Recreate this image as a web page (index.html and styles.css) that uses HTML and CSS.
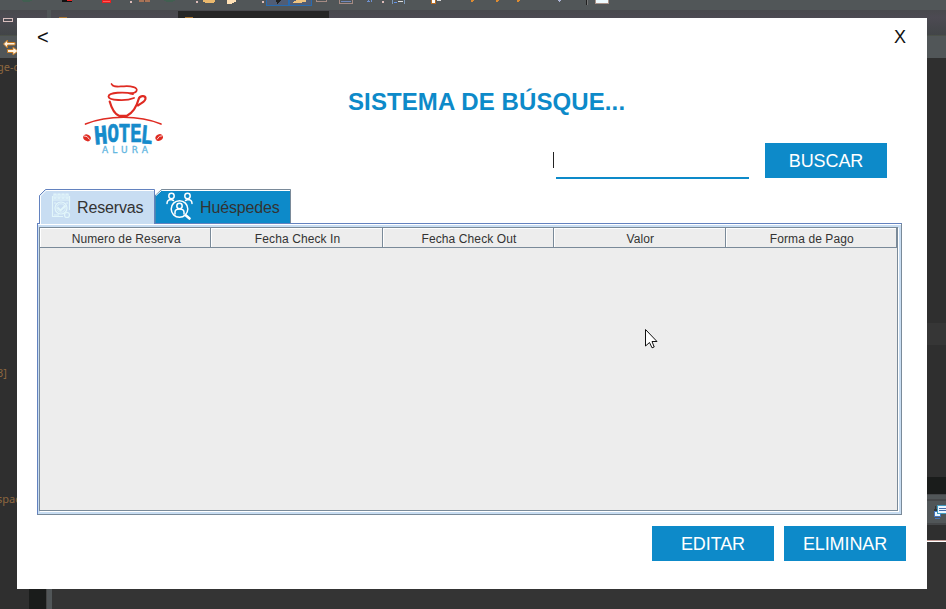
FILE: index.html
```html
<!DOCTYPE html>
<html lang="es">
<head>
<meta charset="utf-8">
<title>Sistema de búsqueda</title>
<link rel="stylesheet" href="styles.css">
</head>
<body>
<svg class="backdrop" width="946" height="609" viewBox="0 0 946 609" shape-rendering="crispEdges">
  <defs>
    <linearGradient id="bar" x1="0" y1="0" x2="0" y2="1"><stop offset="0" stop-color="#48494d"/><stop offset=".3" stop-color="#4c4a52"/><stop offset="1" stop-color="#424548"/></linearGradient>
  </defs>
  <rect width="946" height="609" fill="#2f2f2f"/>
  <rect width="946" height="10" fill="#515658"/>
  <rect y="10" width="946" height="25" fill="url(#bar)"/>
  <rect x="47" y="10" width="4" height="8" fill="#515658"/>
  <rect x="178" y="11" width="151" height="7" fill="#262626"/>
  <rect y="35" width="946" height="1" fill="#4b5049"/>
  <rect y="36" width="946" height="22" fill="#515658"/>
  <rect x="3.5" y="18.5" width="9" height="3" fill="none" stroke="#d9bfbf"/>
  <path d="M22 0h10v1h-2v1h-7v-1h-1z" fill="#415f51"/>
  <path d="M62 0h10v2h-10z" fill="#111"/><path d="M67 0h5v1h-5z" fill="#e22"/>
  <path d="M102 0h9v3h-9z" fill="#e92020"/><path d="M103 1h7v1h-7z" fill="#ff5959"/>
  <path d="M130 1h2v2h-2zM196 1h2v2h-2zM262 1h2v2h-2zM382 1h2v2h-2z" fill="#ddbbb8"/>
  <path d="M139 0h11v2h-11z" fill="#a97356"/><path d="M144 0h1v2h-1z" fill="#5e4943"/>
  <path d="M164 0h11v1h-2v1h-7v-1h-2z" fill="#415f51"/>
  <path d="M203 0h12v2h-1v1h-9v-1h-2z" fill="#eab86d"/><path d="M227 0h9v2h-2v1h-2v1h-5z" fill="#ffe1b6"/>
  <path d="M266.5 0v5.5h22V0M289.5 0v5.5h22V0" fill="#505d75" stroke="#286bb0"/>
  <path d="M276 0h5l-4 4z" fill="#222"/><path d="M297 0h9v2h-4v1h-9v-1z" fill="#edc37f"/>
  <path d="M316.500 0v1.500h10v-1.500M339.500 0v3.500h13v-3.500" fill="none" stroke="#a58b84"/><path d="M341 1h10v1h-10z" fill="#6f88bd"/>
  <path d="M368 0h1v1h1v1h-3zM371 0h1v2h-1z" fill="#6e91d0"/><path d="M392.500 0v3.500M404.500 0v3.500" fill="none" stroke="#7b98b8"/><path d="M394 2h3v1h-3z" fill="#5f91e8"/>
  <path d="M398 1h5v1h-5zM437 0h4v1h-4z" fill="#ddd"/>
  <path d="M431 0h5v4h-5z" fill="#b76c24"/><path d="M432 0h3v3h-3z" fill="#fff"/>
  <path d="M471 0h3v1h-1v1h-2v-1zM495 0h4v1h-1v1h-2v-1zM516 0h4v1h-1v1h-2v-1z" fill="#dc8b32"/>
  <path d="M558 0h3v1h-1v1h-1z" fill="#adb5d6"/><path d="M586 0h1v5h-1z" fill="#202020"/><path d="M587 0h1v5h-1z" fill="#777"/>
  <path d="M595 0h14v4h-14z" fill="#a99289"/><path d="M596 0h12v3h-12z" fill="#eefaff"/>
  <path d="M59 17h8v1h-8zM185 17h8v1h-8z" fill="#a87532"/>
  <g shape-rendering="auto" fill="#fff2df" stroke="#c77c24" stroke-width="1"><path d="M3.5 44l4-4v2.500H15v2.500H7.500V48z"/><path d="M18 51l-5-4v2.500H7.500v3H13V55z"/></g>
  <text class="code" x="-3" y="71">ge-d</text>
  <text class="code" x="-3" y="377">3]</text>
  <text class="code" x="-3" y="503">spac</text>
  <rect x="927" y="323" width="19" height="22" fill="#363636"/>
  <rect x="927" y="477" width="19" height="17" fill="#1a1c1b"/>
  <rect x="927" y="494" width="19" height="31" fill="#515658"/>
  <path d="M927 494h19v1h-19zM927 499h19v2h-19zM927 523h19v2h-19z" fill="#454749"/>
  <path d="M936 505l-2 6v4l3-3z" fill="#303538"/>
  <rect x="934.5" y="511.500" width="6" height="5" fill="#e9f5ff" stroke="#4474bd"/>
  <path d="M935 518h5v1h-5z" fill="#4474bd"/>
  <rect x="937.500" y="505.500" width="12" height="8" fill="#e9f5ff" stroke="#419bc0"/>
  <path d="M939 508h7v1h-7zM939 510h7v1h-7z" fill="#456ba8"/>
  <rect x="927" y="540" width="19" height="69" fill="#343434"/>
  <path d="M927 540h19v1h-19z" fill="#c49e98"/><path d="M927 541h19v1h-19z" fill="#fff"/>
  <rect x="52" y="589" width="894" height="20" fill="#343434"/>
  <rect x="29" y="589" width="17" height="20" fill="#1a1c1b"/>
  <rect x="46" y="589" width="6" height="20" fill="#515658"/><rect x="46" y="589" width="1" height="20" fill="#444"/>
</svg>

<main class="window">
  <div class="titlebar"><span class="back">&lt;</span><span>X</span></div>
  <header class="head">
    <svg class="logo" width="84" height="76" viewBox="81 80 84 76">
      <g fill="none" stroke="#df2b22" stroke-linecap="round">
        <path stroke-width="1.700" d="M111.500 84C113 87.500 117.500 86.500 124 86.300C131 85.800 138.500 87.500 136.500 91C135.500 92.800 132.500 93.300 130 93.300"/>
        <path stroke-width="1.900" d="M133 94C124 91.500 109 92.500 108.500 96.500C108.500 100.500 126 101.500 134 98"/>
        <path stroke-width="2.200" d="M109.700 101.500C111.500 108 113.500 113.500 119 115.800H127C133 112.500 136.500 107 138.500 99.500C139.500 95.500 145 95 145.500 98C146 102 140.500 103 138 105.500"/>
        <path stroke-width="1.700" d="M85.500 124C108 115 139 115 161 124"/>
      </g>
      <g fill="#df2b22"><ellipse cx="87" cy="137.800" rx="3.900" ry="3.200" transform="rotate(30 87 137.800)"/><ellipse cx="159.200" cy="137.500" rx="3.900" ry="3.200" transform="rotate(-30 159.200 137.500)"/></g>
      <path d="M84 136l3 .5 2.500 3M162.500 135.800l-3 .5-2.500 3" fill="none" stroke="#fff" stroke-width=".8"/>
      <g class="logo-name"><text x="94" y="144" textLength="13.500" lengthAdjust="spacingAndGlyphs" transform="rotate(-5 100 135)">H</text><text x="107.500" y="142" textLength="34" lengthAdjust="spacingAndGlyphs">OTE</text><text x="141" y="143.500" textLength="12" lengthAdjust="spacingAndGlyphs" transform="rotate(5 146 135)">L</text></g>
      <text class="logo-sub" x="102" y="152.500" textLength="46" lengthAdjust="spacing">ALURA</text>
    </svg>
    <h1>SISTEMA DE BÚSQUE...</h1>
  </header>
  <div class="search"><span class="caret"></span><div class="field"></div><button>BUSCAR</button></div>
  <nav class="tabs">
    <div class="tab active">
      <svg class="edge" width="116" height="35"><path d="M.5 35V6.500L6.500.5H115.500V35" fill="#c8ddf2" stroke="#6382bf"/><path d="M1.500 35V7L7 1.500H115" fill="none" stroke="#fff"/></svg>
      <svg class="icon" width="20" height="26" viewBox="0 0 20 26" fill="none" stroke="#e2f6fa" stroke-width="1.200"><path d="M1.500 3v20.500H12M18.500 3v14M1.500 7H18.500"/><path d="M3 1.200h2v4H3zM7 1.200h2v4H7zM11 1.200h2v4h-2zM15 1.200h2v4h-2z"/><circle cx="10" cy="15" r="6"/><circle cx="10" cy="15" r="4.200" stroke-width=".8"/><path d="M6.500 14.500l3 3 5-5" stroke-width="1.800"/><circle cx="16" cy="22" r="2.500"/><path d="M3 10h2M15 10h2M3 22h5"/></svg>
      <span>Reservas</span>
    </div>
    <div class="tab guests">
      <svg class="edge" width="136" height="34"><path d="M0 34V6.500L6.500.5H135.500V34" fill="#0d8ac9" stroke="#7a8a99"/><path d="M0 0H6L0 6z" fill="#fff"/><path d="M1 6.500L6.500 1.500H135" fill="none" stroke="#fff"/></svg>
      <svg class="icon" width="27" height="28" viewBox="0 0 27 28" fill="none" stroke="#fff" stroke-width="1.500" stroke-linecap="round"><circle cx="5.500" cy="4" r="2.700"/><path d="M1 11.500C1 8 3.500 7.500 5.500 7.500L7.500 8.500"/><circle cx="21.500" cy="4" r="2.700"/><path d="M26 11.500C26 8 23.500 7.500 21.500 7.500L19.500 8.500"/><circle cx="13.500" cy="17" r="8.300"/><circle cx="13.500" cy="14" r="2.700"/><path d="M9 22v-2c.3-4 8.700-4 9 0v2"/><path d="M20 23.500l3.500 3" stroke-width="2.600"/></svg>
      <span>Huéspedes</span>
    </div>
  </nav>
  <section class="pane"><div class="scroll">
    <div class="columns"><div>Numero de Reserva</div><div>Fecha Check In</div><div>Fecha Check Out</div><div>Valor</div><div>Forma de Pago</div></div>
  </div></section>
  <footer class="actions"><button>EDITAR</button><button>ELIMINAR</button></footer>
</main>
<svg class="cursor" width="13" height="21" viewBox="0 0 13 21"><path d="M.5.5V17L4.500 13.500L7 18.800L9.200 18L7 12.500H12z" fill="#fff" stroke="#111"/></svg>
</body>
</html>
```

FILE: styles.css
```css
* { box-sizing: border-box; }
body {
  margin: 0;
  padding: 18px 0 0 17px;
  height: 609px;
  overflow: hidden;
  font-family: "Liberation Sans", Arial, sans-serif;
  color: #333;
}
.backdrop { position: absolute; top: 0; left: 0; z-index: -1; }
.code { font: 11px "Noto Sans", sans-serif; fill: #8d673f; }
.window { width: 910px; height: 571px; background: #fff; }
.titlebar {
  display: flex;
  justify-content: space-between;
  height: 36px;
  padding: 0 21px 0 20px;
  font-size: 18px;
  line-height: 39px;
  color: #111;
}
.back { font-size: 20px; }
.head { display: flex; height: 89px; padding: 26px 0 0 64px; }
.logo { display: block; flex: none; }
.logo-name { font: bold 27px "Liberation Mono", monospace; fill: #168bcb; stroke: #168bcb; stroke-width: .7; }
.logo-sub { font: 9px "DejaVu Sans", sans-serif; fill: #62b6df; stroke: #62b6df; stroke-width: .3; }
h1 { margin: -6px 0 0 183px; font-size: 24px; line-height: 56px; font-weight: bold; letter-spacing: .1px; color: #0d8ac9; white-space: nowrap; }
.search { display: flex; height: 46px; padding-left: 536px; }
.caret { width: 1px; height: 16px; margin: 9px 2px 0 0; background: #222; }
.field { width: 193px; height: 36px; border-bottom: 2px solid #0d8ac9; margin-right: 16px; }
button {
  width: 122px;
  height: 35px;
  padding: 1px 0 0;
  border: 0;
  background: #0d8ac9;
  color: #fff;
  font: 18px/34px "Liberation Sans", Arial, sans-serif;
  letter-spacing: -.1px;
}
.tabs { display: flex; height: 34px; padding-left: 22px; }
.tab { position: relative; display: flex; width: 116px; height: 34px; font-size: 16px; line-height: 37px; letter-spacing: -.15px; }
.tab > span { position: relative; }
.active { z-index: 1; padding-left: 12px; }
.active > span { margin-left: 6px; }
.guests { width: 136px; padding-left: 11px; }
.guests > span { margin-left: 7px; }
.edge { position: absolute; top: 0; left: 0; }
.icon { position: relative; flex: none; margin-top: 4px; }
.guests .icon { margin-top: 3px; }
.pane {
  width: 865px;
  height: 292px;
  margin-left: 20px;
  padding: 3px 2px 2px 1px;
  background: #c8ddf2;
  border: 1px solid #7a8a99;
  border-top-color: #6382bf;
  border-left-color: #6382bf;
  box-shadow: inset 0 1px #fff;
  display: grid;
}
.scroll { background: #ededed; border: 1px solid #7a8a99; box-shadow: 1px 1px #fff; margin: 0 1px 1px 0; }
.columns { display: grid; grid-template-columns: repeat(5, 1fr); grid-template-rows: 20px; height: 20px; font-size: 12px; line-height: 22px; letter-spacing: .1px; text-align: center; }
.columns div { padding-left: 2px; border: solid #7a8a99; border-width: 0 1px 1px 0; box-shadow: inset 1px 1px #fff; }
.actions { display: flex; gap: 10px; padding: 11px 0 0 635px; }
.cursor { position: absolute; left: 645px; top: 329px; }
```
